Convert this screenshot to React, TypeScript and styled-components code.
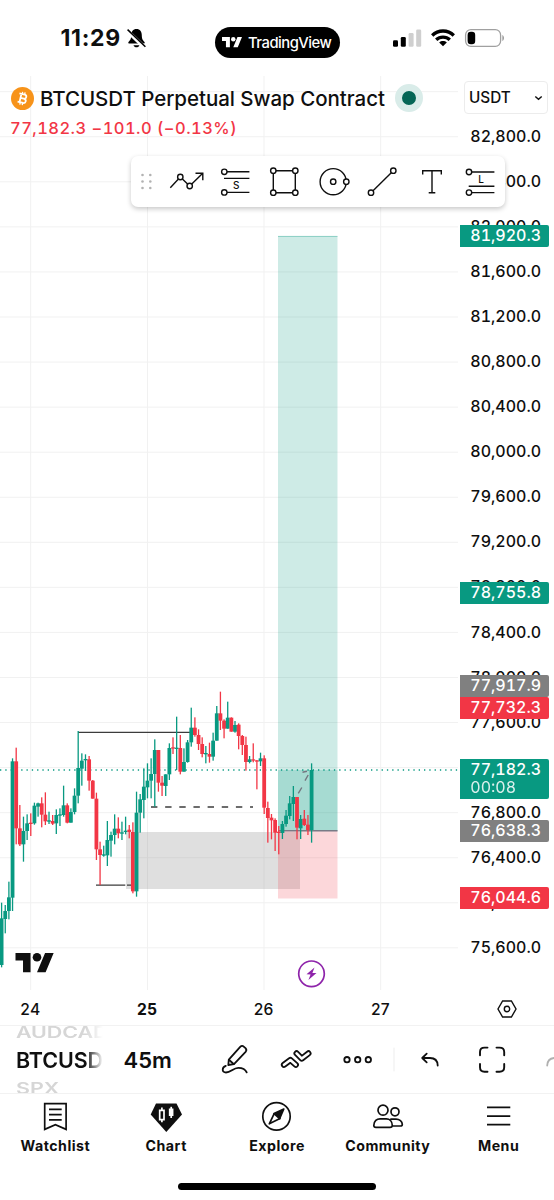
import React from 'react';
import styled, { createGlobalStyle } from 'styled-components';

const GREEN = '#089981';
const RED = '#f23645';
const INK = '#0f0f0f';

const Global = createGlobalStyle`
  *, *::before, *::after { box-sizing: border-box; }
  body {
    margin: 0;
    background: #fff;
    color: ${INK};
    font-family: Inter, "Liberation Sans", sans-serif;
  }
  svg { display: block; overflow: visible; }
`;

const Screen = styled.div`
  width: 554px;
  height: 1200px;
  display: flex;
  flex-direction: column;
  overflow: hidden;
  background: #fff;
`;

/* ---------- status bar ---------- */
const StatusBar = styled.header`
  height: 76px;
  flex: none;
  display: grid;
  grid-template-columns: 215px 125px 1fr;
  align-items: center;
`;
const Clock = styled.div`
  display: flex;
  align-items: center;
  gap: 6.5px;
  padding-left: 60.5px;
  font-size: 23px;
  font-weight: 700;
  letter-spacing: 0.7px;
  line-height: 30px;
`;
const Island = styled.div`
  height: 31px;
  margin-top: 9px;
  border-radius: 16px;
  background: #000;
  color: #fff;
  display: flex;
  align-items: center;
  gap: 6px;
  padding-left: 7px;
  font-size: 14.8px;
  font-weight: 500;
  letter-spacing: -0.5px;
`;
const Signals = styled.div`
  display: flex;
  align-items: center;
  gap: 10px;
  padding-left: 53px;
`;

/* ---------- chart ---------- */
const ChartArea = styled.main`
  position: relative;
  height: 914px;
  flex: none;
  display: grid;
  grid-template-columns: 458px 96px;
`;
const Plot = styled.section`
  position: relative;
  overflow: hidden;
`;
const Legend = styled.div`
  position: absolute;
  top: 7px;
  left: 11px;
  display: flex;
  flex-direction: column;
`;
const SymbolRow = styled.div`
  display: flex;
  align-items: center;
  height: 30px;
`;
const SymbolName = styled.h1`
  margin: 0 0 0 6px;
  width: 345px;
  font-size: 20.5px;
  font-weight: 500;
  letter-spacing: -0.04px;
  white-space: nowrap;
`;
const MarketDot = styled.span`
  width: 28px;
  height: 28px;
  margin-left: 10px;
  border-radius: 50%;
  border: 7.5px solid #d9ece9;
  background: #056656;
`;
const Change = styled.div`
  margin: 4px 0 0 -1px;
  height: 22px;
  line-height: 22px;
  font-size: 16.5px;
  font-weight: 450;
  font-variant-numeric: tabular-nums;
  letter-spacing: 0.45px;
  color: ${RED};
  white-space: nowrap;
`;
const PriceScale = styled.aside`
  position: relative;
  font-size: 16px;
  font-weight: 500;
  font-variant-numeric: tabular-nums;
`;
const Currency = styled.button`
  display: flex;
  align-items: center;
  justify-content: space-between;
  width: 84px;
  height: 33px;
  margin: 5px 0 0 6px;
  padding: 0 4px 0 4px;
  border: 1.5px solid #ececec;
  border-radius: 4px;
  background: #fff;
  font: 500 15.3px Inter, sans-serif;
  color: ${INK};
`;
const PriceLabel = styled.div`
  height: 45.06px;
  padding-left: 12.3px;
  line-height: 45px;
`;
const PriceTag = styled.div<{ $y: number; $color: string }>`
  position: absolute;
  left: 2px;
  top: ${p => p.$y}px;
  width: 88.5px;
  padding-left: 10.3px;
  border-radius: 0 2px 2px 0;
  background: ${p => p.$color};
  color: #fff;
  line-height: 21.8px;
`;
const Countdown = styled.div`
  height: 18px;
  line-height: 13px;
  font-weight: 400;
  opacity: 0.85;
`;
const DrawTools = styled.div`
  position: absolute;
  left: 131px;
  top: 80px;
  width: 374px;
  height: 51px;
  display: flex;
  border-radius: 7px;
  background: #fff;
  box-shadow: 0 2px 5px rgba(0, 0, 0, 0.22);
`;
const Handle = styled.span`
  width: 31px;
`;
const Tool = styled.span`
  width: 49px;
`;

/* ---------- time scale ---------- */
const TimeScale = styled.div`
  height: 36px;
  flex: none;
  display: flex;
  align-items: center;
  border-bottom: 1px solid #f2f2f2;
`;
const Day = styled.span<{ $first?: boolean; $bold?: boolean }>`
  width: 116.7px;
  margin-left: ${p => (p.$first ? '-28px' : '0')};
  text-align: center;
  font-size: 15.6px;
  font-weight: ${p => (p.$bold ? 700 : 500)};
  letter-spacing: 0.2px;
  padding-top: 3px;
`;
const ScaleSettings = styled.span`
  margin: 2px 0 0 58px;
`;

/* ---------- symbol toolbar ---------- */
const Toolbar = styled.div`
  height: 68px;
  flex: none;
  display: flex;
  align-items: center;
  border-bottom: 1px solid #f2f2f2;
`;
const SymbolWheel = styled.div`
  width: 87px;
  height: 67px;
  margin-left: 16px;
  overflow: hidden;
  display: flex;
  flex-direction: column;
  align-items: flex-start;
  justify-content: center;
  mask-image: linear-gradient(90deg, #000 80%, transparent 100%);
`;
const WheelItem = styled.div<{ $faded?: boolean }>`
  flex: none;
  height: 28px;
  line-height: 28px;
  font-size: 21.5px;
  font-weight: 600;
  color: ${p => (p.$faded ? '#d6d6d6' : INK)};
  letter-spacing: -0.1px;
  transform: ${p => (p.$faded ? 'scaleY(0.72)' : 'none')};
`;
const Interval = styled.div`
  width: 70px;
  margin-left: 20.5px;
  font-size: 22px;
  font-weight: 600;
`;
const ToolbarIcons = styled.svg`
  flex: none;
  margin-left: 6.5px;
`;

/* ---------- bottom navigation ---------- */
const Nav = styled.nav`
  height: 89px;
  flex: none;
  display: grid;
  grid-template-columns: repeat(5, 1fr);
`;
const NavItem = styled.a`
  display: flex;
  flex-direction: column;
  align-items: center;
  padding-top: 6px;
  font-size: 14.2px;
  font-weight: 700;
  letter-spacing: 0.5px;
  line-height: 18px;
  svg { margin-bottom: 4px; }
`;
const HomeIndicator = styled.div`
  width: 198px;
  height: 6.5px;
  flex: none;
  margin: 0 auto;
  border-radius: 4px;
  background: #000;
`;

const Logo = ({ width, color }: { width: number; color: string }) => (
  <svg width={width} height={width * 0.507} viewBox="0 4 35.5 18" fill={color}>
    <path d="M14 22H7V11H0V4h14v18zM28 22h-8l7.5-18h8L28 22z" />
    <circle cx="20" cy="8" r="4" />
  </svg>
);

/* Candles: [up, high, bodyTop, bodyBottom, low], in thirds of a pixel from the base line */
type Candle = [number, number, number, number, number];
const CANDLES: Candle[] = [
  [1, 548, 595, 735, 742], [1, 555, 573, 597, 640], [1, 485, 532, 573, 598], [1, 115, 124, 533, 573],
  [0, 83, 124, 325, 373], [0, 255, 325, 373, 378], [1, 290, 333, 373, 425], [1, 283, 310, 333, 360],
  [0, 280, 308, 312, 348], [1, 248, 257, 310, 314], [1, 248, 250, 260, 290], [0, 232, 250, 284, 322],
  [0, 217, 284, 304, 315], [1, 275, 301, 305, 312], [0, 285, 303, 311, 315], [1, 268, 285, 310, 342],
  [1, 265, 283, 287, 318], [1, 197, 256, 285, 290], [0, 250, 256, 308, 310], [1, 265, 276, 308, 308],
  [1, 205, 227, 276, 283], [1, 33, 144, 227, 250], [1, 100, 122, 146, 197], [1, 103, 117, 121, 153],
  [0, 108, 118, 182, 212], [0, 180, 182, 236, 236], [0, 218, 236, 388, 420], [0, 365, 388, 405, 495],
  [1, 377, 403, 407, 410], [1, 303, 360, 406, 438], [1, 335, 345, 362, 410], [1, 283, 326, 345, 373],
  [0, 292, 326, 340, 355], [1, 305, 337, 341, 360], [1, 290, 332, 336, 343], [0, 315, 329, 336, 355],
  [0, 307, 336, 514, 520], [1, 215, 278, 514, 530], [1, 222, 238, 278, 338], [1, 145, 200, 240, 295],
  [1, 130, 182, 202, 235], [1, 115, 162, 182, 235], [1, 58, 90, 162, 260], [0, 90, 90, 188, 215],
  [0, 168, 188, 197, 228], [1, 163, 163, 198, 228], [1, 70, 84, 163, 180], [0, 52, 82, 85, 102],
  [1, -10, 83, 86, 150], [0, 45, 84, 155, 163], [1, 85, 126, 155, 155], [1, 60, 67, 126, 128],
  [1, -37, 23, 67, 80], [0, -8, 23, 45, 50], [0, 28, 45, 72, 90], [0, 52, 72, 102, 112],
  [1, 78, 99, 103, 130], [0, 68, 102, 110, 128], [1, 38, 62, 110, 122], [1, -42, -20, 62, 62],
  [0, -85, -20, 2, 30], [0, -2, 2, 26, 55], [1, -55, -7, 26, 26], [0, -8, -7, 35, 35],
  [1, 3, 15, 35, 38], [0, 10, 14, 48, 88], [0, 45, 48, 75, 105], [0, 50, 75, 126, 152],
  [1, 108, 118, 126, 130], [0, 70, 118, 121, 127], [0, 120, 121, 124, 208], [1, 98, 115, 124, 138],
  [0, 106, 115, 263, 282], [0, 245, 264, 294, 368], [0, 282, 293, 301, 358], [0, 295, 300, 338, 393],
  [0, 318, 335, 339, 403], [1, 303, 312, 339, 357], [1, 270, 287, 312, 320], [1, 228, 250, 288, 298],
  [1, 198, 231, 252, 303], [0, 231, 231, 323, 358], [1, 285, 297, 325, 357], [0, 270, 296, 315, 318],
  [0, 285, 314, 330, 345], [1, 130, 150, 330, 368],
];
const BASE = 644;
const FIRST_X = 1.6;
const STEP = 3.647;
const ROWS = Array.from({ length: 19 }, (_, i) => 82800 - i * 400);
const money = (n: number) => n.toLocaleString('en-US', { minimumFractionDigits: 1 });

const Candles = () => (
  <g>
    {CANDLES.map(([up, hi, top, bottom, lo], i) => {
      const x = FIRST_X + i * STEP;
      const y = (v: number) => BASE + v / 3;
      return (
        <g key={i} fill={up ? GREEN : RED}>
          <rect x={x - 0.65} y={y(hi)} width={1.3} height={(lo - hi) / 3} />
          <rect x={x - 1.9} y={y(top)} width={3.8} height={Math.max(1.3, (bottom - top) / 3)} />
        </g>
      );
    })}
  </g>
);

const PlotDrawing = () => (
  <svg width="458" height="914" viewBox="0 0 458 914">
    <g stroke="#f1f1f1" strokeWidth="1">
      {Array.from({ length: 20 }, (_, i) => (
        <path key={i} d={`M0 ${15.7 + i * 45.06}H458`} />
      ))}
      {[30.7, 147.5, 264, 380.7].map(x => <path key={x} d={`M${x} 0V914`} />)}
    </g>
    <rect x="126" y="756" width="174" height="57" fill="#808080" fillOpacity="0.25" />
    <rect x="278" y="160" width="59.5" height="595" fill={GREEN} fillOpacity="0.2" />
    <rect x="278" y="694" width="59.5" height="61" fill={GREEN} fillOpacity="0.2" />
    <rect x="278" y="755" width="59.5" height="67.5" fill={RED} fillOpacity="0.2" />
    <path d="M278 160.4H337.5" stroke={GREEN} strokeOpacity=".35" />
    <path d="M278 754.8H337.5" stroke="#787b86" strokeWidth="1.4" />
    <g stroke="#3c3c3c" strokeWidth="1.3">
      <path d="M78 656.4H191" />
      <path d="M96 809.2H125.3M127 809.2H133" />
      <path d="M151 731H253" strokeWidth="1.5" strokeDasharray="6.4 7.75" />
    </g>
    <path d="M0 694H458" stroke={GREEN} strokeWidth="1.3" strokeDasharray="1.3 4" />
    <path d="M298.3 717.3L301.8 711.5M305 704.7L308.2 699M302.5 696.2L307 695.3" stroke="#737780" strokeWidth="1.4" />
    <Candles />
    <g transform="translate(311.5 897.8)">
      <circle r="12.8" fill="#fff" stroke="#8e24aa" strokeWidth="1.7" />
      <path d="M3-6.2L-5 .5L-.9.6L-3.1 6.2L5-.8L.9-.9Z" fill="#8e24aa" />
    </g>
    <g transform="translate(15.5 877) scale(1.075)" fill={INK}>
      <path d="M14 18H7V7H0V0h14v18zM28 18h-8l7.5-18h8L28 18z" />
      <circle cx="20" cy="4" r="4" />
    </g>
  </svg>
);

const Coin = () => (
  <svg width="23" height="23" viewBox="0 0 23 23">
    <circle cx="11.5" cy="11.5" r="11.5" fill="#f7931a" />
    <g transform="rotate(13 11.5 11.5)" fill="none" stroke="#fff" strokeWidth="1.8">
      <path d="M7.4 7.3H12.8A2 2 0 0 1 12.8 11.4H9.2M12.8 11.4H13.1A2.1 2.1 0 0 1 13.1 15.7H7.4M9.4 7.3V15.7" />
      <path d="M10.2 5V7.3M12.7 5V7.3M10.2 15.7V18M12.7 15.7V18" strokeWidth="1.3" />
    </g>
  </svg>
);

const Knob = ({ x, y }: { x: number; y: number }) => <circle cx={x} cy={y} r="2.7" fill="#fff" />;
const glyph = { fontSize: 10, fill: INK, stroke: 'none', textAnchor: 'middle' as const, fontWeight: 500 };

const TOOLS = [
  <><path d="M8.3 31.7L18.3 21L27.7 30L40.5 17.5M33.5 17.2H40.8V24.3" /><Knob x={18.3} y={21} /><Knob x={27.7} y={30} /></>,
  <><path d="M13.3 15.8H38.4M13 22.4H38.4M13.3 36.4H38.4" /><Knob x={13.3} y={15.8} /><Knob x={13.3} y={36.4} /><text x="25.3" y="33.3" {...glyph}>S</text></>,
  <><path d="M13.3 14.7H35.3V36.7H13.3Z" /><Knob x={13.3} y={14.7} /><Knob x={35.3} y={14.7} /><Knob x={13.3} y={36.7} /><Knob x={35.3} y={36.7} /></>,
  <><circle cx="24.2" cy="25.7" r="13.1" /><Knob x={24.2} y={25.7} /><Knob x={37.3} y={25.7} /></>,
  <><path d="M13 36.7L35.3 14.7" /><Knob x={13} y={36.7} /><Knob x={35.3} y={14.7} /></>,
  <path d="M15.7 18.6V14.7H34.3V18.6M25 14.7V36.7M21.7 36.7H28.3" />,
  <><path d="M13 16H38.4M12.7 30.3H38.4M13 36.6H38.4" /><Knob x={13} y={16} /><Knob x={13} y={36.6} /><text x="25" y="27.2" {...glyph}>L</text></>,
];

const DrawingTools = () => (
  <DrawTools>
    <Handle>
      <svg width="31" height="51" fill="#b2b2b2">
        {[19, 25.5, 32].map(y => <g key={y}><circle cx="11.5" cy={y} r="1.3" /><circle cx="19.3" cy={y} r="1.3" /></g>)}
      </svg>
    </Handle>
    {TOOLS.map((drawing, i) => (
      <Tool key={i}>
        <svg width="49" height="51" fill="none" stroke={INK} strokeWidth="1.4">{drawing}</svg>
      </Tool>
    ))}
  </DrawTools>
);

const NAV = [
  { label: 'Watchlist', icon: <><path d="M5.7 3.7H27.1V29.4L16.4 24.8L5.7 29.4Z" /><path d="M10 9.3H22.7M10 14.6H22.7M10 19.8H22.7" /></> },
  { label: 'Chart', icon: <><path d="M6 3.5H26.5L32 14.6L16.3 32L.7 14.6Z" fill={INK} stroke="none" /><g stroke="#fff"><path d="M9.7 10.4H14V19.6H9.7ZM11.9 7.5V10.4M11.9 19.6V22.3" /><path d="M19.7 9.3H22.6V15.1H19.7Z" fill="#fff" /><path d="M21.2 6.8V18" /></g></> },
  { label: 'Explore', icon: <><circle cx="16.5" cy="16.4" r="13.7" /><path d="M14.3 13.3L9.3 23.8L20.5 18.2" strokeLinejoin="round" /><path d="M14 13.5L19.6 18.6L23.8 9Z" fill={INK} strokeLinejoin="round" /></> },
  { label: 'Community', icon: <><circle cx="12" cy="10.2" r="5" /><circle cx="24" cy="11.8" r="4" /><path d="M5 27.3C3.7 27.3 2.8 26.8 2.8 25.6C2.8 21 6 18.8 9 18.8H15.3C18.5 18.8 21.3 21 21.3 25.6C21.3 26.8 20.4 27.3 19 27.3ZM19.3 19.2H25C28.5 19.2 31.3 21.5 31.3 24.4C31.3 25.5 30.5 26 29.4 26H21.3" /></> },
  { label: 'Menu', icon: <path d="M5 7.3H28.3M5 16.2H28.3M5 24.6H28.3" /> },
];

const TAGS = [
  { y: 149.4, value: 81920.3, color: GREEN },
  { y: 506, value: 78755.8, color: GREEN },
  { y: 599.3, value: 77917.9, color: '#808080' },
  { y: 621, value: 77732.3, color: RED },
  { y: 683.3, value: 77182.3, color: GREEN, countdown: '00:08' },
  { y: 744, value: 76638.3, color: '#808080' },
  { y: 811.3, value: 76044.6, color: RED },
];

export default function App() {
  return (
    <Screen>
      <Global />
      <StatusBar>
        <Clock>
          11:29
          <svg width="19" height="20" viewBox="0 0 19 20">
            <path d="M9.5 1C6 1 4.2 3.5 4.2 7.5C4.2 11.5 2.7 12.5 1.5 14C1 14.8 1.4 15.6 2.3 15.6H16.7C17.6 15.6 18 14.8 17.5 14C16.3 12.5 14.8 11.5 14.8 7.5C14.8 3.5 13 1 9.5 1ZM6.5 17.2C7 18.7 8.2 19.2 9.5 19.2C10.8 19.2 12 18.7 12.5 17.2Z" fill="#000" />
            <path d="M0 2.6L17.5 19.4" stroke="#fff" strokeWidth="4" />
            <path d="M.6 1.6L18.4 18.7" stroke="#000" strokeWidth="1.5" />
          </svg>
        </Clock>
        <Island><Logo width={20} color="#fff" />TradingView</Island>
        <Signals>
          <svg width="28" height="18" viewBox="0 0 28 18">
            <rect x="0" y="11.3" width="5" height="6.5" rx="1.3" />
            <rect x="7.8" y="8" width="5" height="9.8" rx="1.3" />
            <rect x="15.6" y="4" width="5" height="13.8" rx="1.3" fill="#cfcfcf" />
            <rect x="23.2" y="0.5" width="5" height="17.3" rx="1.3" fill="#cfcfcf" />
          </svg>
          <svg width="24" height="18" viewBox="0 0 24 18" fill="none" stroke="#000" strokeWidth="3.3">
            <path d="M1.2 6.5C7.2.5 16.8.5 22.8 6.5M5.2 10.8C9 7.1 15 7.1 18.8 10.8" />
            <path d="M12 17.3L8.2 13.5C10.3 11.6 13.7 11.6 15.8 13.5Z" fill="#000" stroke="none" />
          </svg>
          <svg width="40" height="18" viewBox="0 0 40 18">
            <rect x=".6" y=".6" width="35" height="16.8" rx="5.3" fill="none" stroke="#a0a0a0" strokeWidth="1.3" />
            <rect x="2.6" y="2.7" width="7.6" height="12.6" rx="3.2" />
            <path d="M37.3 6C39.6 6.8 39.6 11.2 37.3 12Z" fill="#a0a0a0" />
          </svg>
        </Signals>
      </StatusBar>

      <ChartArea>
        <Plot>
          <PlotDrawing />
          <Legend>
            <SymbolRow>
              <Coin />
              <SymbolName>BTCUSDT Perpetual Swap Contract</SymbolName>
              <MarketDot />
            </SymbolRow>
            <Change>77,182.3 −101.0 (−0.13%)</Change>
          </Legend>
        </Plot>
        <PriceScale>
          <Currency>
            USDT
            <svg width="9" height="6" fill="none" stroke={INK} strokeWidth="1.5"><path d="M1.3 1.5L4.5 4.2L7.7 1.5" /></svg>
          </Currency>
          {ROWS.map(p => <PriceLabel key={p}>{money(p)}</PriceLabel>)}
          {TAGS.map(t => (
            <PriceTag key={t.value} $y={t.y} $color={t.color}>
              {money(t.value)}
              {t.countdown && <Countdown>{t.countdown}</Countdown>}
            </PriceTag>
          ))}
        </PriceScale>
        <DrawingTools />
      </ChartArea>

      <TimeScale>
        <Day $first>24</Day>
        <Day $bold>25</Day>
        <Day>26</Day>
        <Day>27</Day>
        <ScaleSettings>
          <svg width="20" height="18" viewBox="0 0 20 18" fill="none" stroke={INK} strokeWidth="1.4">
            <path d="M5.6 1H14.4L19 9L14.4 17H5.6L1 9Z" /><circle cx="10" cy="9" r="2.7" />
          </svg>
        </ScaleSettings>
      </TimeScale>

      <Toolbar>
        <SymbolWheel>
          <WheelItem $faded>AUDCAD</WheelItem>
          <WheelItem>BTCUSD</WheelItem>
          <WheelItem $faded>SPX</WheelItem>
        </SymbolWheel>
        <Interval>45m</Interval>
        <ToolbarIcons width="354" height="67" viewBox="200 1026 354 67" fill="none" stroke={INK} strokeWidth="1.8" strokeLinecap="round" strokeLinejoin="round">
          <path d="M228.3 1065L228.8 1059.6L240.2 1046.9Q242 1045 244 1046.8L245.5 1048.2Q247.2 1050 245.6 1051.8L234 1064.2Z" />
          <path d="M229.2 1060L233.6 1064M225.8 1065.9C221.8 1067.3 221.5 1072.5 226 1072.5C231 1072.5 233 1067.8 238.3 1067.8C242.5 1067.8 245.3 1069 246.7 1072.4" />
          <path d="M284 1064.8L290.4 1060L295.8 1064.8M296.6 1053.4L301.8 1058.6L308.4 1053.4" strokeWidth="6.2" />
          <path d="M284 1064.8L290.4 1060L295.8 1064.8M296.6 1053.4L301.8 1058.6L308.4 1053.4" stroke="#fff" strokeWidth="2.6" />
          <circle cx="347" cy="1059.7" r="2.7" /><circle cx="357.7" cy="1059.7" r="2.7" /><circle cx="368.3" cy="1059.7" r="2.7" />
          <path d="M394 1048V1071" stroke="#ededed" strokeWidth="1" />
          <path d="M426.7 1053.7L422.2 1058L426.7 1062.3M422.4 1058H430Q437.5 1058 437.7 1065.5" />
          <path d="M480 1055.3V1052Q480 1047.6 484.5 1047.6H487.5M496.5 1047.6H499.5Q504.2 1047.6 504.2 1052V1055.3M504.2 1064V1067.3Q504.2 1071.8 499.5 1071.8H496.5M487.5 1071.8H484.5Q480 1071.8 480 1067.3V1064" strokeWidth="1.9" />
          <path d="M547.2 1065.5Q547.4 1058.8 554 1058" stroke="#b0b0b0" />
        </ToolbarIcons>
      </Toolbar>

      <Nav>
        {NAV.map(n => (
          <NavItem key={n.label}>
            <svg width="33" height="33" viewBox="0 0 33 33" fill="none" stroke={INK} strokeWidth="1.7">{n.icon}</svg>
            {n.label}
          </NavItem>
        ))}
      </Nav>
      <HomeIndicator />
    </Screen>
  );
}
